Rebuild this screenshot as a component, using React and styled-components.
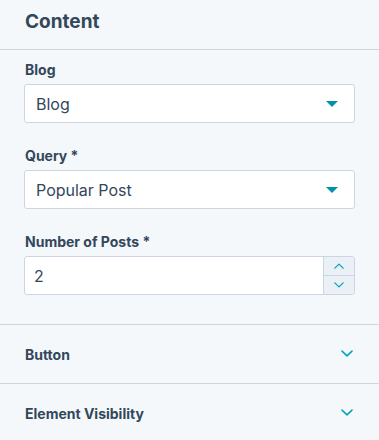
import React from 'react'
import styled, { createGlobalStyle } from 'styled-components'

const Global = createGlobalStyle`
  body {
    margin: 0;
    background: #f5f8fa;
    font-family: Inter, "Noto Sans", sans-serif;
    color: #33475b;
  }
`

const Panel = styled.div`
  width: 379px;
  height: 440px;
  overflow: hidden;
  background: #f5f8fa;
`

const Header = styled.div`
  height: 49px;
  display: flex;
  align-items: center;
  padding: 0 25px;
  border-bottom: 1px solid #cbd6e2;
  h2 {
    margin: 0 0 6px;
    font-size: 19px;
    font-weight: 700;
  }
`

const Body = styled.div`
  padding: 10px 24px 29px;
  display: flex;
  flex-direction: column;
  gap: 23px;
  border-bottom: 1px solid #cbd6e2;
`

const Field = styled.div`
  display: flex;
  flex-direction: column;
  gap: 4px;
`

const Label = styled.label`
  font-size: 14px;
  font-weight: 700;
  line-height: 20px;
  padding-left: 1px;
`

const Box = styled.div`
  height: 37px;
  display: flex;
  align-items: center;
  background: #fff;
  border: 1px solid #cbd6e2;
  border-radius: 3px;
  box-sizing: content-box;
`

const Value = styled.span`
  flex: 1;
  font-size: 16px;
  padding-left: ${p => p.$pad || 11}px;
`

const Caret = styled.span`
  width: 0;
  height: 0;
  border-left: 6px solid transparent;
  border-right: 6px solid transparent;
  border-top: 6px solid #0091ae;
  margin-right: 16px;
`

const Stepper = styled.div`
  width: 30px;
  align-self: stretch;
  display: flex;
  flex-direction: column;
  background: #eaf0f6;
  border-left: 1px solid #cbd6e2;
  border-radius: 0 3px 3px 0;
`

const Step = styled.div`
  flex: 1;
  display: flex;
  align-items: center;
  justify-content: center;
  & + & {
    border-top: 1px solid #cbd6e2;
  }
`

const Row = styled.div`
  height: 58px;
  display: flex;
  align-items: center;
  justify-content: space-between;
  padding: 0 26px 0 25px;
  border-bottom: 1px solid #cbd6e2;
  font-size: 14px;
  font-weight: 700;
`

const Chevron = ({ up, size = 12 }) => (
  <svg width={size} height={size * 0.6} viewBox="0 0 12 7" fill="none">
    <path
      d={up ? 'M1 6L6 1.2L11 6' : 'M1 1L6 5.8L11 1'}
      stroke="#00a4bd"
      strokeWidth="1.5"
      strokeLinecap="round"
      strokeLinejoin="round"
    />
  </svg>
)

const App = () => {
  return (
    <Panel>
      <Global />
      <Header>
        <h2>Content</h2>
      </Header>
      <Body>
        <Field>
          <Label>Blog</Label>
          <Box>
            <Value>Blog</Value>
            <Caret />
          </Box>
        </Field>
        <Field>
          <Label>Query *</Label>
          <Box>
            <Value>Popular Post</Value>
            <Caret />
          </Box>
        </Field>
        <Field>
          <Label>Number of Posts *</Label>
          <Box>
            <Value $pad={9}>2</Value>
            <Stepper>
              <Step><Chevron up size={10} /></Step>
              <Step><Chevron size={10} /></Step>
            </Stepper>
          </Box>
        </Field>
      </Body>
      <Row>
        Button
        <Chevron />
      </Row>
      <Row>
        Element Visibility
        <Chevron />
      </Row>
    </Panel>
  )
}

export default App
